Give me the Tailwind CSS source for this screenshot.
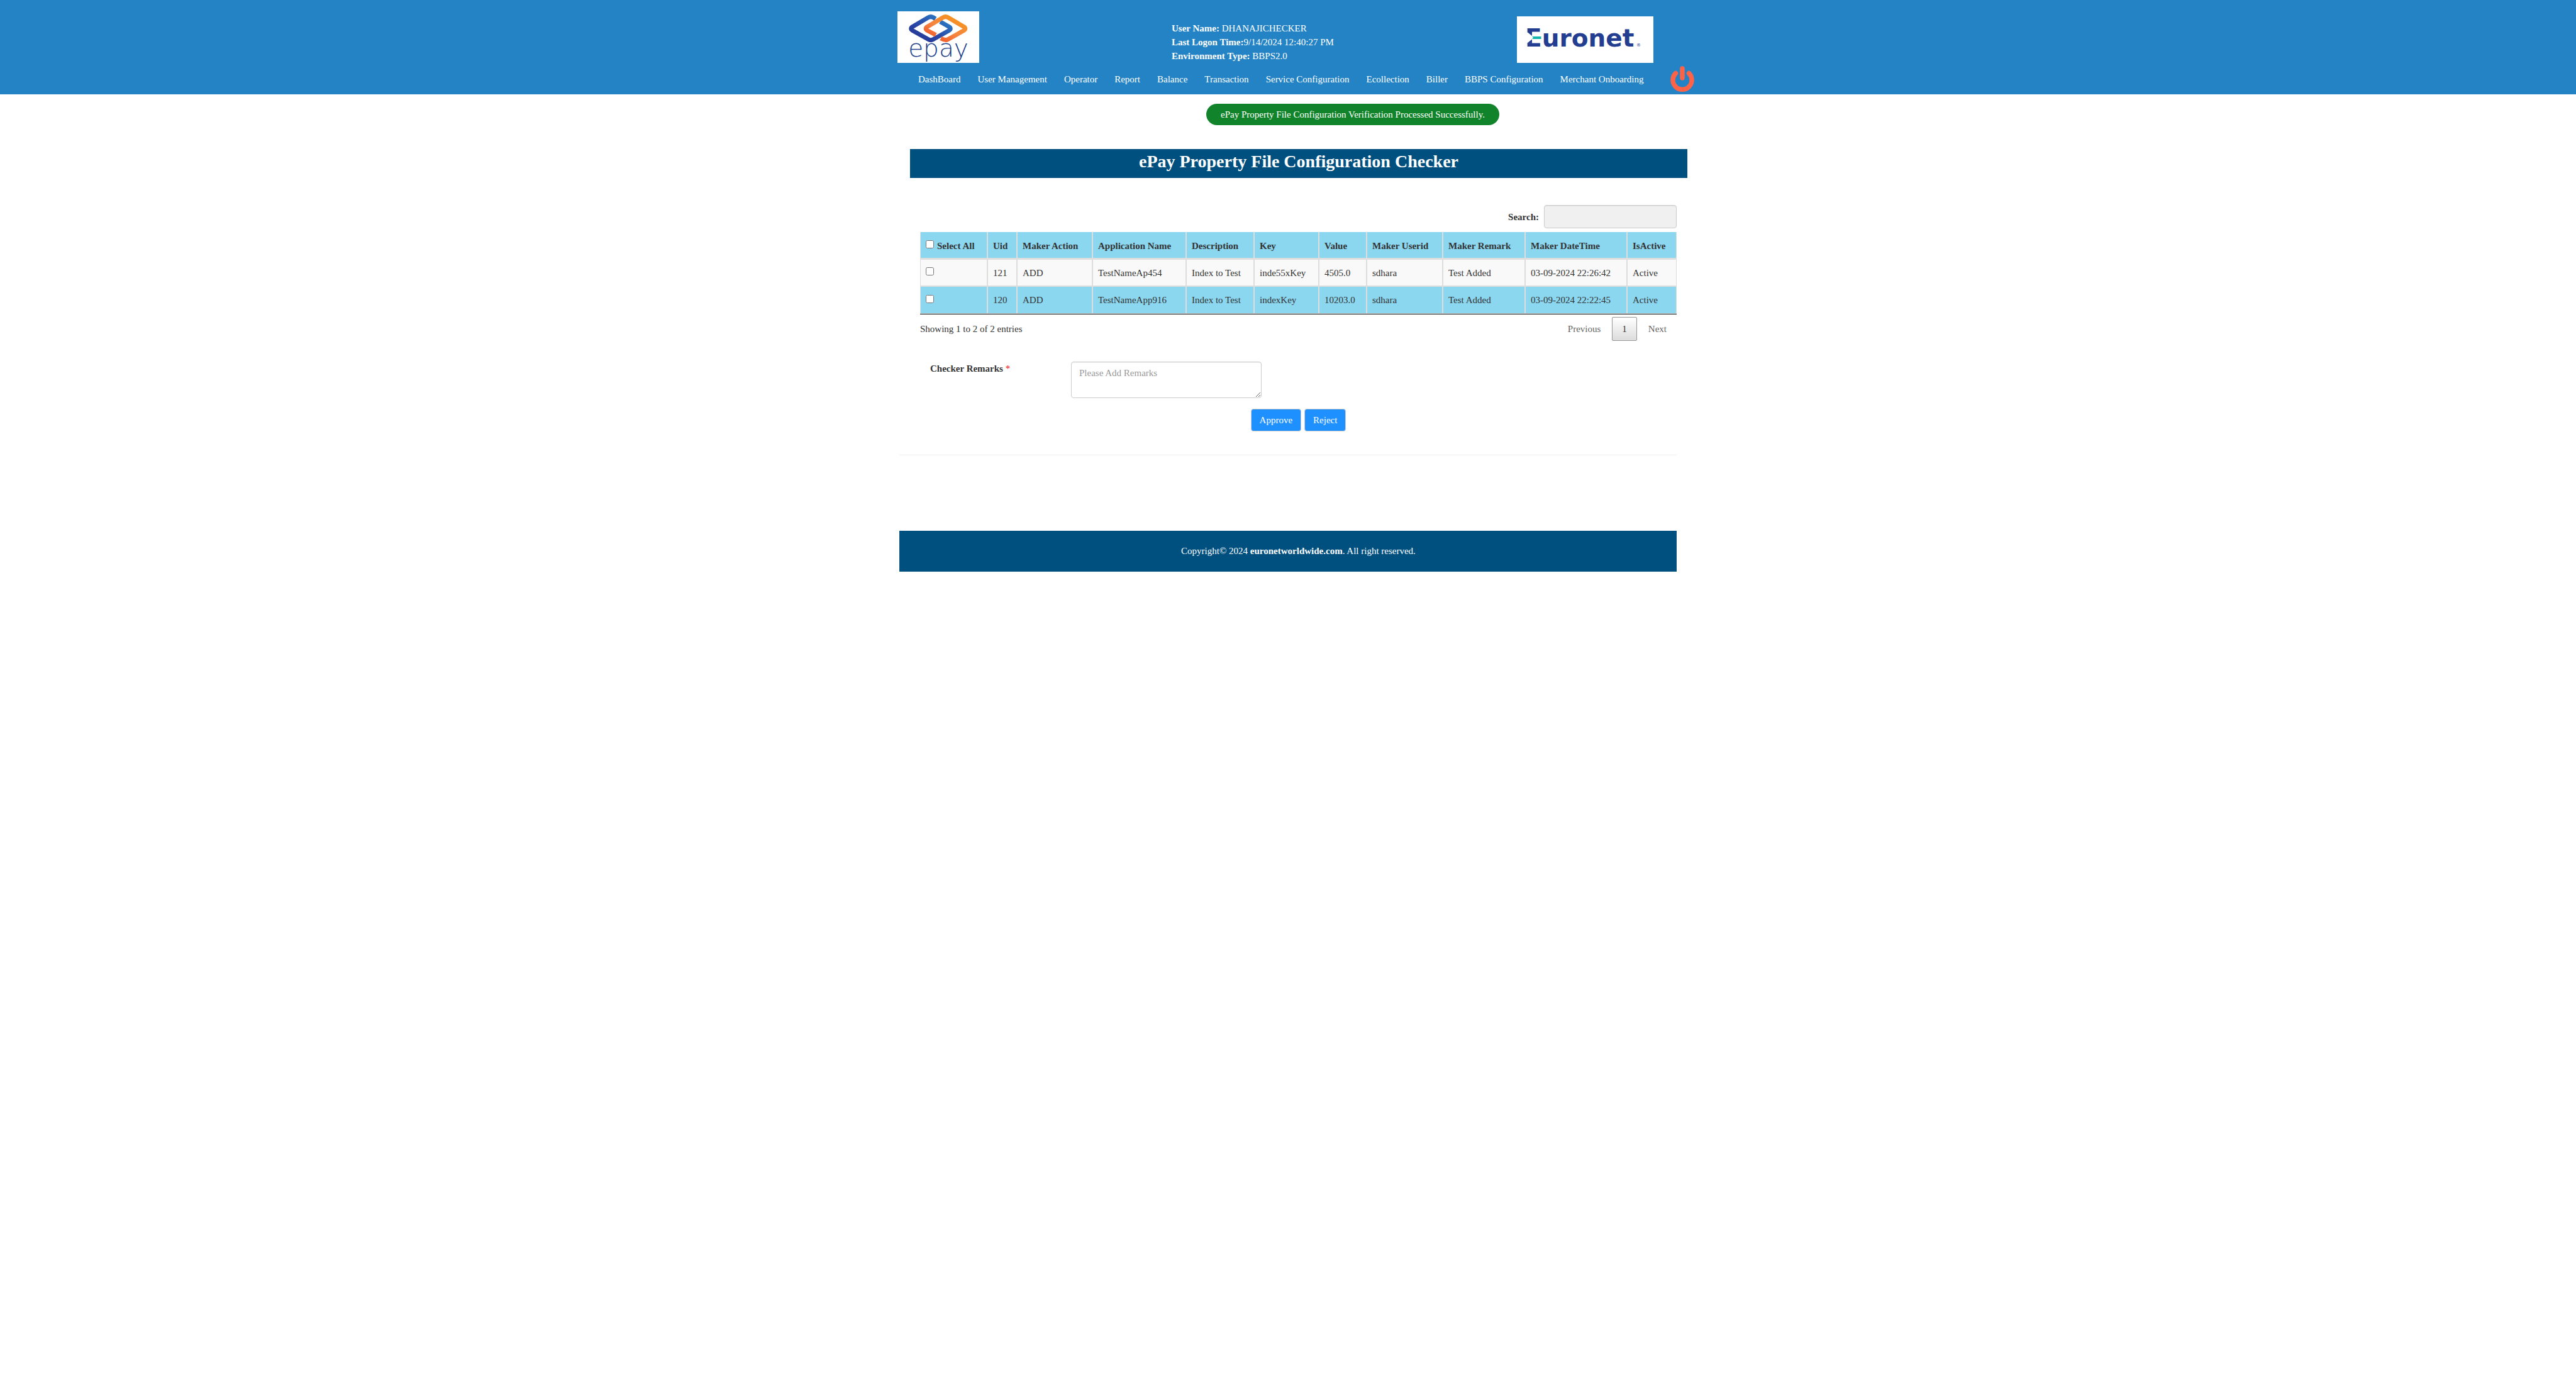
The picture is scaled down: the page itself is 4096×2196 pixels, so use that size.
<!DOCTYPE html>
<html lang="en">
<head>
<meta charset="utf-8">
<meta name="viewport" content="width=device-width, initial-scale=1">
<title>ePay Property File Configuration Checker</title>
<script src="https://cdn.jsdelivr.net/npm/@tailwindcss/browser@4"></script>
</head>
<body class="min-h-screen bg-white font-['Liberation_Serif','Times_New_Roman',serif] text-[15px] leading-[22px] text-[#333]">

<header class="bg-[#2483c4] text-white">
  <div class="mx-auto max-w-[1292px] pt-[18px] pb-[3px]">
    <div class="flex items-start pl-[25px] pr-[65px]">
      <svg class="h-[82px] w-[130px] shrink-0 bg-white" viewBox="0 0 130 82" role="img" aria-label="epay">
        <defs>
          <linearGradient id="blue" x1="0" y1="1" x2="1" y2="0"><stop offset="0" stop-color="#24308f"/><stop offset=".45" stop-color="#2a4aa8"/><stop offset="1" stop-color="#2a86cc"/></linearGradient>
          <linearGradient id="orange" x1="0" y1="1" x2=".8" y2="0"><stop offset="0" stop-color="#f04e23"/><stop offset=".5" stop-color="#f58440"/><stop offset="1" stop-color="#f7941d"/></linearGradient>
        </defs>
        <g fill="none" stroke-width="7" stroke-linejoin="round">
          <path d="M60.500 12 L57 9.800 Q53 7.500 49 9.800 L24 24.500 Q19.500 27.500 24 30.500 L49 44.500 Q53 47 57 44.500 L82 30.500 Q86.500 27.500 82 24.500 L68 16.500" stroke="url(#blue)"/>
          <path d="M61 37.500 L47.500 30.500 Q43 27.500 47.500 24.500 L72.500 9.800 Q76.500 7.500 80.500 9.800 L105.500 24.500 Q110 27.500 105.500 30.500 L80.500 44.500 Q76.500 47 69 43" stroke="url(#orange)"/>
        </g>
        <text x="65" y="72" text-anchor="middle" font-family="'DejaVu Sans',sans-serif" font-weight="200" font-size="39" fill="#20418c">epay</text>
      </svg>
      <div class="ml-[306px] mt-4 whitespace-nowrap">
        <p><b>User Name:</b> DHANAJICHECKER</p>
        <p><b>Last Logon Time:</b>9/14/2024 12:40:27 PM</p>
        <p><b>Environment Type:</b> BBPS2.0</p>
      </div>
      <svg class="ml-auto mt-2 h-[74px] w-[217px] shrink-0 bg-white" viewBox="0 0 217 74" role="img" aria-label="Euronet">
        <text x="13" y="48" font-family="'DejaVu Sans',sans-serif" font-weight="700" font-size="39" fill="#233e90">Euronet</text>
        <path d="M15 25.200h25v17H15z" fill="#fff"/>
        <path d="M16.500 25h7.500v6zM16.500 42.500h7.500v-6z" fill="#233e90"/>
        <path d="M24 32h14.500v4H24l2-2z" fill="#12b5ac"/>
        <text x="190" y="48" font-family="'DejaVu Sans',sans-serif" font-size="7" fill="#233e90">®</text>
      </svg>
    </div>
    <div class="mt-[5px] flex items-center pl-[58px]">
      <nav class="flex gap-[27px] whitespace-nowrap" aria-label="Main">
        <a href="#">DashBoard</a>
        <a href="#">User Management</a>
        <a href="#">Operator</a>
        <a href="#">Report</a>
        <a href="#">Balance</a>
        <a href="#">Transaction</a>
        <a href="#">Service Configuration</a>
        <a href="#">Ecollection</a>
        <a href="#">Biller</a>
        <a href="#">BBPS Configuration</a>
        <a href="#">Merchant Onboarding</a>
      </nav>
      <a href="#" class="ml-auto" aria-label="Log out">
        <svg class="h-[42px] w-[38px]" viewBox="0 0 38 42" fill="none" stroke="#ff6347" stroke-width="7.500" stroke-linecap="round">
          <path d="M19 4v15"/>
          <path d="M8.500 11.500A15 15 0 1 0 29.500 11.500"/>
        </svg>
      </a>
    </div>
  </div>
</header>

<main class="mx-auto max-w-[1236px]">
  <div class="pt-[15px] pl-[488px]">
    <p role="status" class="inline-block rounded-full bg-[#11842b] px-[23px] py-[6px] align-top whitespace-nowrap text-white">ePay Property File Configuration Verification Processed Successfully.</p>
  </div>

  <h1 class="mt-[38px] -mr-[17px] ml-[17px] h-[46px] bg-[#00507f] text-center text-[28px] leading-10 font-bold text-white">ePay Property File Configuration Checker</h1>

  <section class="mt-[43px] pl-[33px]">
    <div class="mb-[6px] flex items-center justify-end gap-2">
      <label for="search" class="font-bold">Search:</label>
      <input id="search" type="search" class="h-[37px] w-[211px] rounded border border-[#ccc] bg-[#f0f0f0] px-3 shadow-[inset_0_1px_1px_rgba(0,0,0,0.075)]">
    </div>

    <table class="w-full table-fixed border-separate border-spacing-0 border-b border-b-[#111] text-left whitespace-nowrap">
      <colgroup>
        <col class="w-[108px]"><col class="w-[47px]"><col class="w-[120px]"><col class="w-[149px]"><col class="w-[108px]"><col class="w-[103px]"><col class="w-[76px]"><col class="w-[121px]"><col class="w-[131px]"><col class="w-[162px]"><col class="w-[78px]">
      </colgroup>
      <thead>
        <tr class="h-[44px] bg-[#8bd7f0] *:border-r-2 *:border-b-3 *:border-[#ddd] *:pl-2 *:pt-[2px]">
          <th class="border-l"><label class="flex items-center gap-[5px]"><input type="checkbox" class="mb-1 size-[13px]">Select All</label></th>
          <th>Uid</th><th>Maker Action</th><th>Application Name</th><th>Description</th><th>Key</th><th>Value</th><th>Maker Userid</th><th>Maker Remark</th><th>Maker DateTime</th><th class="border-r!">IsActive</th>
        </tr>
      </thead>
      <tbody>
        <tr class="h-[43px] bg-[#f9f9f9] *:border-r-2 *:border-b-2 *:border-[#ddd] *:pl-2">
          <td class="border-l"><input type="checkbox" aria-label="Select 121" class="mb-1 block size-[13px]"></td>
          <td>121</td><td>ADD</td><td>TestNameAp454</td><td>Index to Test</td><td>inde55xKey</td><td>4505.0</td><td>sdhara</td><td>Test Added</td><td>03-09-2024 22:26:42</td><td class="border-r!">Active</td>
        </tr>
        <tr class="h-[43px] bg-[#8bd7f0] *:border-r-2 *:border-b *:border-[#ddd] *:pl-2">
          <td class="border-l"><input type="checkbox" aria-label="Select 120" class="mb-1 block size-[13px]"></td>
          <td>120</td><td>ADD</td><td>TestNameApp916</td><td>Index to Test</td><td>indexKey</td><td>10203.0</td><td>sdhara</td><td>Test Added</td><td>03-09-2024 22:22:45</td><td class="border-r!">Active</td>
        </tr>
      </tbody>
    </table>

    <div class="mt-1 flex items-center justify-between">
      <p>Showing 1 to 2 of 2 entries</p>
      <div class="flex gap-[2px]">
        <button class="h-[38px] px-4 text-[#666]">Previous</button>
        <button class="h-[38px] rounded-xs border border-[#979797] bg-linear-to-b from-white to-[#dcdcdc] px-[15px]">1</button>
        <button class="h-[38px] px-4 text-[#666]">Next</button>
      </div>
    </div>
  </section>

  <form class="mt-[33px]">
    <div class="flex items-start pl-[49px]">
      <label for="remarks" class="w-[224px] font-bold">Checker Remarks <span class="font-normal text-[#f00]">*</span></label>
      <textarea id="remarks" placeholder="Please Add Remarks" class="h-[58px] w-[303px] resize rounded border border-[#ccc] px-3 py-[6px] shadow-[inset_0_1px_1px_rgba(0,0,0,0.075)] placeholder:text-[#999]"></textarea>
    </div>
    <div class="mt-[17px] flex justify-center gap-[5px] pl-[33px]">
      <button type="button" class="h-[36px] rounded border border-[#ccc] bg-[#1e90ff] px-[13px] text-white">Approve</button>
      <button type="button" class="h-[36px] rounded border border-[#ccc] bg-[#1e90ff] px-[13px] text-white">Reject</button>
    </div>
  </form>

  <hr class="mt-[37px] border-[#eee]">

  <footer class="mt-[120px] bg-[#00507f] py-[21px] pl-[33px] text-center leading-[23px] text-white">
    Copyright© 2024 <b>euronetworldwide.com</b>. All right reserved.
  </footer>
</main>

</body>
</html>
